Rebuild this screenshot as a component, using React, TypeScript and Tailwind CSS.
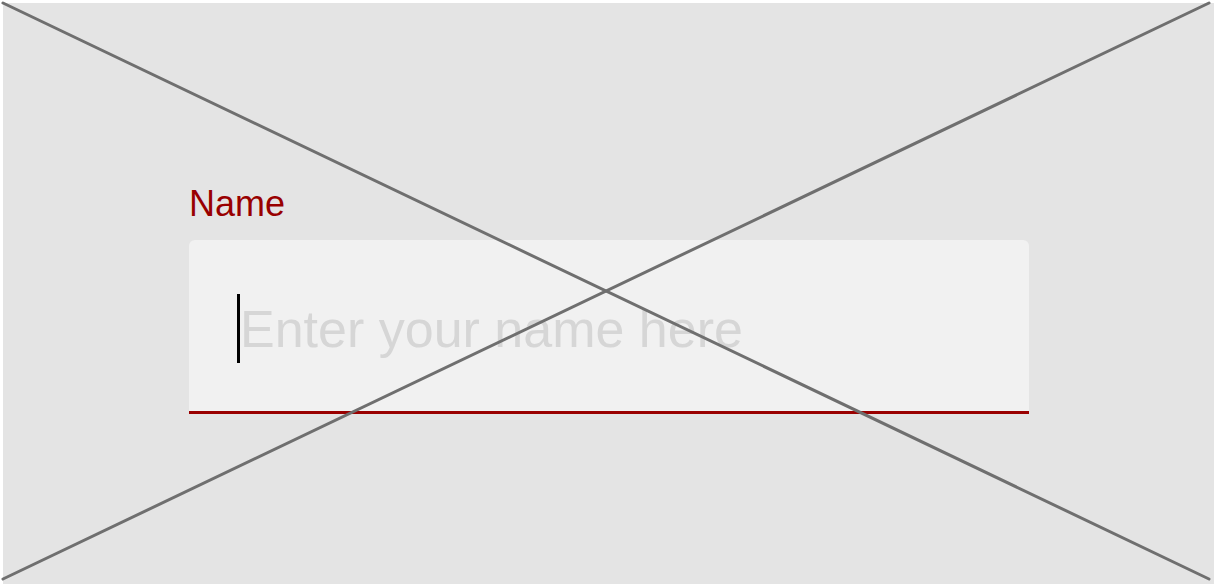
import React from "react";

function CrossOut() {
  return (
    <div className="pointer-events-none absolute top-[3px] right-[5px] bottom-[5px] left-[3px]">
      <svg
        className="block h-full w-full overflow-visible"
        stroke="#6f6f6f"
        strokeWidth="3"
        strokeLinecap="round"
        aria-hidden="true"
      >
        <line x1="0" y1="0" x2="100%" y2="100%" />
        <line x1="0" y1="100%" x2="100%" y2="0" />
      </svg>
    </div>
  );
}

function NameField() {
  return (
    <div className="flex flex-col gap-3">
      <label htmlFor="name" className="text-4xl leading-12 text-[#990000]">
        Name
      </label>
      <div className="relative flex rounded-t-md border-b-[3px] border-[#990000] bg-[#f1f1f1] px-12 pt-[54px] pb-12">
        <input
          id="name"
          type="text"
          placeholder="Enter your name here"
          className="h-[69px] min-w-0 flex-1 bg-transparent pl-[3px] text-[52px] text-black caret-transparent outline-none placeholder:text-[#d6d6d6]"
        />
        <span className="absolute top-[54px] left-12 h-[69px] w-[3px] bg-black" aria-hidden="true" />
      </div>
    </div>
  );
}

export default function App() {
  return (
    <main className="relative flex min-h-screen flex-col bg-white pt-[3px] pl-[3px] font-['Liberation_Sans',Arial,sans-serif]">
      <section className="flex-1 rounded-tl-sm bg-[#e4e4e4] pt-[177px] pr-[185px] pb-24 pl-[186px]">
        <NameField />
      </section>
      <CrossOut />
    </main>
  );
}
